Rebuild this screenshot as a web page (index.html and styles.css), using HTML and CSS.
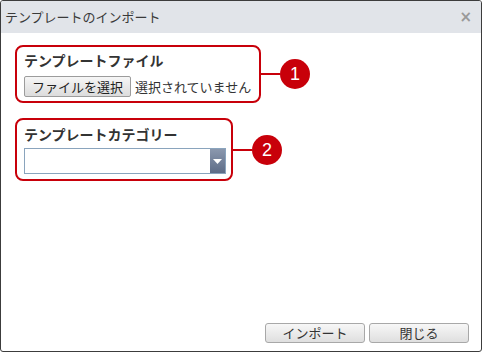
FILE: index.html
```html
<!DOCTYPE html>
<html lang="ja">
<head>
<meta charset="utf-8">
<title>テンプレートのインポート</title>
<link rel="stylesheet" href="styles.css">
</head>
<body>
<div class="dialog">
  <div class="titlebar">
    <span class="title">テンプレートのインポート</span>
    <span class="close">×</span>
  </div>
  <div class="content">
    <div class="row">
      <div class="group group-file">
        <div class="label">テンプレートファイル</div>
        <div class="file-line">
          <span class="file-btn">ファイルを選択</span>
          <span class="file-status">選択されていません</span>
        </div>
      </div>
      <div class="connector"></div>
      <div class="badge">1</div>
    </div>
    <div class="row">
      <div class="group group-cat">
        <div class="label">テンプレートカテゴリー</div>
        <div class="select">
          <span class="select-value"></span>
          <span class="select-arrow"><svg width="9" height="5" viewBox="0 0 9 5"><path d="M0 0 H9 L4.5 5 Z" fill="#fff"/></svg></span>
        </div>
      </div>
      <div class="connector"></div>
      <div class="badge">2</div>
    </div>
  </div>
  <div class="footer">
    <span class="btn">インポート</span>
    <span class="btn">閉じる</span>
  </div>
</div>
</body>
</html>
```
FILE: styles.css
```css
* { box-sizing: border-box; }
html, body { margin: 0; padding: 0; background: #fff; }
body {
  font-family: "Noto Sans CJK JP", "Noto Sans", sans-serif;
  color: #333;
}
.dialog {
  width: 482px;
  height: 352px;
  border: 1px solid #3c3c3c;
  border-radius: 3px;
  display: flex;
  flex-direction: column;
  overflow: hidden;
  background: #fff;
}
.titlebar {
  height: 32px;
  background: #e1e4e9;
  display: flex;
  align-items: center;
  justify-content: space-between;
  padding: 0 9px 0 4px;
}
.title {
  font-size: 13px;
  line-height: 16px;
  color: #3a3a3a;
}
.close {
  font-family: "DejaVu Sans", sans-serif;
  font-size: 15px;
  line-height: 15px;
  color: #999;
  font-weight: bold;
}
.content {
  flex: 1;
  padding: 12px 0 0 14px;
  display: flex;
  flex-direction: column;
  gap: 15px;
}
.row {
  display: flex;
  align-items: center;
}
.group {
  border: 2px solid #c8000a;
  border-radius: 8px;
  padding: 4px 0 0 7px;
}
.group-file { width: 246px; height: 58px; }
.group-cat { width: 218px; height: 63px; padding-top: 5px; }
.label {
  font-size: 14px;
  line-height: 18px;
  font-weight: bold;
  color: #333;
  white-space: nowrap;
}
.file-line {
  display: flex;
  align-items: center;
  margin-top: 7px;
  gap: 4px;
  white-space: nowrap;
}
.file-btn {
  flex-shrink: 0;
  width: 107px;
  height: 21px;
  border: 1px solid #9c9c9c;
  border-radius: 2px;
  background: linear-gradient(#f6f6f6, #dcdcdc);
  font-size: 13px;
  line-height: 19px;
  text-align: center;
  color: #222;
}
.file-status {
  font-size: 13px;
  line-height: 19px;
  color: #333;
}
.select {
  margin-top: 5px;
  width: 202px;
  height: 26px;
  border: 1px solid #8aa4bd;
  display: flex;
  justify-content: flex-end;
  background: #fff;
}
.select-arrow {
  width: 15px;
  height: 100%;
  background: linear-gradient(#8b98ae, #5d6c87);
  display: flex;
  align-items: center;
  justify-content: center;
}
.connector {
  width: 19px;
  height: 2px;
  background: #c8000a;
}
.badge {
  width: 30px;
  height: 30px;
  border-radius: 50%;
  background: #c8000a;
  color: #fff;
  font-family: "Liberation Sans", sans-serif;
  font-size: 18px;
  line-height: 30px;
  text-align: center;
}
.footer {
  display: flex;
  justify-content: flex-end;
  gap: 4px;
  padding: 0 12px 8px 0;
}
.btn {
  width: 100px;
  height: 20px;
  border: 1px solid #a8a8a8;
  border-radius: 3px;
  background: linear-gradient(#f7f7f7, #dfdfdf);
  font-size: 13px;
  line-height: 18px;
  text-align: center;
  color: #333;
}
```
